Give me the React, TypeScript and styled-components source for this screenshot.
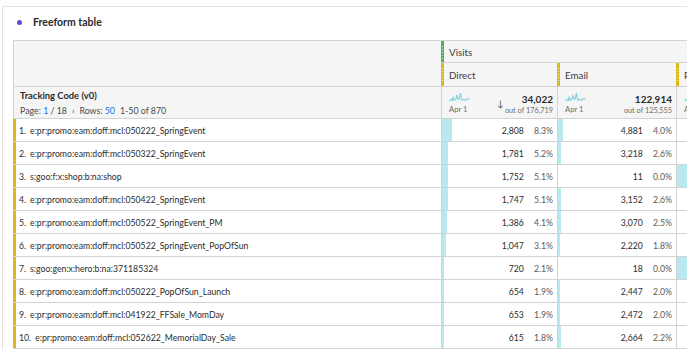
import React from 'react';
import styled, { createGlobalStyle, css } from 'styled-components';

const GlobalStyle = createGlobalStyle`
  *, *::before, *::after {
    box-sizing: border-box;
  }
  html, body {
    margin: 0;
    padding: 0;
    background: #fff;
    overflow: hidden;
  }
  body {
    font-family: 'Lato', 'Open Sans', sans-serif;
    color: #2c2c2c;
  }
`;

const COLS = '428px 116px 119px 140px';
const YELLOW = '#dcb81c';
const GREEN = '#4fae5f';
const BAR = '#b9e9ee';
const LINE = '#d3d3d3';

interface IRow {
  label: string;
  direct: number;
  directPct: number;
  email: number;
  emailPct: number;
  other: number;
}

const rows: IRow[] = [
  { label: 'e:pr:promo:eam:doff:mcl:050222_SpringEvent', direct: 2808, directPct: 8.3, email: 4881, emailPct: 4.0, other: 0 },
  { label: 'e:pr:promo:eam:doff:mcl:050322_SpringEvent', direct: 1781, directPct: 5.2, email: 3218, emailPct: 2.6, other: 0 },
  { label: 's:goo:f:x:shop:b:na:shop', direct: 1752, directPct: 5.1, email: 11, emailPct: 0.0, other: 30 },
  { label: 'e:pr:promo:eam:doff:mcl:050422_SpringEvent', direct: 1747, directPct: 5.1, email: 3152, emailPct: 2.6, other: 0 },
  { label: 'e:pr:promo:eam:doff:mcl:050522_SpringEvent_PM', direct: 1386, directPct: 4.1, email: 3070, emailPct: 2.5, other: 0 },
  { label: 'e:pr:promo:eam:doff:mcl:050522_SpringEvent_PopOfSun', direct: 1047, directPct: 3.1, email: 2220, emailPct: 1.8, other: 0 },
  { label: 's:goo:gen:x:hero:b:na:371185324', direct: 720, directPct: 2.1, email: 18, emailPct: 0.0, other: 30 },
  { label: 'e:pr:promo:eam:doff:mcl:050222_PopOfSun_Launch', direct: 654, directPct: 1.9, email: 2447, emailPct: 2.0, other: 0 },
  { label: 'e:pr:promo:eam:doff:mcl:041922_FFSale_MomDay', direct: 653, directPct: 1.9, email: 2472, emailPct: 2.0, other: 0 },
  { label: 'e:pr:promo:eam:doff:mcl:052622_MemorialDay_Sale', direct: 615, directPct: 1.8, email: 2664, emailPct: 2.2, other: 0 },
];

const fmt = (n: number) => n.toLocaleString('en-US');

/* ***** panel */
const Panel = styled.section`
  margin: 6px 0 0 2px;
  padding: 7px 0 0 10px;
  border-top: 1px solid #e3e3e3;
  border-left: 1px solid #e3e3e3;
  height: 344px;
`;

const PanelTitle = styled.h2`
  display: flex;
  align-items: center;
  gap: 11px;
  height: 16px;
  margin: 0 0 10px 4px;
  font-size: 10.5px;
  font-weight: 700;
  color: #2c2c2c;
`;

const Dot = styled.span`
  width: 5px;
  height: 5px;
  border-radius: 50%;
  background: #5b4fd6;
`;

const Table = styled.div`
  width: max-content;
  border-top: 1px solid ${LINE};
`;

/* ***** header */
const HeaderGrid = styled.div`
  display: grid;
  grid-template-columns: ${COLS};
  grid-template-rows: 22px 24px 31px;
  background: #f5f5f5;
  border-bottom: 1px solid ${LINE};
`;

const Corner = styled.div`
  grid-column: 1;
  grid-row: 1 / 3;
  border-left: 1px solid ${LINE};
  border-bottom: 1px solid ${LINE};
`;

interface IHeadCellProps {
  span?: boolean;
}

const HeadCell = styled.div<IHeadCellProps>`
  ${({ span }) => css`
    display: flex;
    align-items: stretch;
    border-bottom: 1px solid ${LINE};
    font-size: 9.8px;
    color: #3e3e3e;
    white-space: nowrap;
    ${span && 'grid-column: 2 / -1;'}
  `}
`;

interface IGripProps {
  color: string;
}

const Grip = styled.span<IGripProps>`
  ${({ color }) => css`
    flex: none;
    width: 3px;
    background:
      repeating-linear-gradient(to bottom, transparent 0 2px, rgba(255, 255, 255, 0.75) 2px 3px)
        1px 3px / 1px calc(100% - 6px) no-repeat,
      ${color};
  `}
`;

const HeadLabel = styled.span`
  display: flex;
  align-items: center;
  padding-left: 5px;
`;

const DimCell = styled.div`
  display: flex;
  flex-direction: column;
  justify-content: center;
  gap: 4px;
  padding: 1px 0 0 6px;
  border-left: 1px solid ${LINE};
`;

const DimTitle = styled.span`
  font-size: 9.4px;
  font-weight: 700;
  color: #2c2c2c;
`;

const Pager = styled.span`
  display: flex;
  gap: 5px;
  font-size: 8.8px;
  color: #4b4b4b;
`;

const Blue = styled.span`
  color: #1473e6;
`;

const SumCell = styled.div`
  display: flex;
  align-items: flex-start;
  padding: 6px 4px 0 7px;
  border-left: 1px solid ${LINE};
  white-space: nowrap;
`;

const Spark = styled.div`
  display: flex;
  flex-direction: column;
  gap: 1px;
  font-size: 7.6px;
  color: #6e6e6e;
`;

const Arrow = styled.span`
  margin: 5px 0 0 27px;
  font-size: 9px;
  color: #4b4b4b;
`;

const Totals = styled.div`
  display: flex;
  flex-direction: column;
  align-items: flex-end;
  gap: 1px;
  margin-left: auto;
`;

const Total = styled.span`
  font-size: 10px;
  font-weight: 700;
  color: #2c2c2c;
`;

const OutOf = styled.span`
  font-size: 7.3px;
  color: #6e6e6e;
`;

/* ***** rows */
const Row = styled.div`
  display: grid;
  grid-template-columns: ${COLS};
  height: 23px;
  border-bottom: 1px solid ${LINE};
  background: #fff;
`;

const LabelCell = styled.div`
  display: flex;
  align-items: center;
  gap: 4px;
  padding-left: 3px;
  border-left: 3px solid ${YELLOW};
  font-size: 8.7px;
  color: #2c2c2c;
  white-space: nowrap;
`;

const MetricCell = styled.div`
  display: flex;
  align-items: center;
  border-left: 1px solid ${LINE};
  font-size: 8.7px;
  color: #2c2c2c;
`;

const Bar = styled.span`
  align-self: stretch;
  flex: none;
  background: ${BAR};
`;

const Num = styled.span`
  margin-left: auto;
`;

const Pct = styled.span`
  margin-left: 10px;
  padding-right: 4px;
  text-align: right;
  color: #5a5a5a;
`;

const Sparkline = () => (
  <svg width="21" height="10" viewBox="0 0 22 11">
    <polyline
      points="0,9 2,7 3,8 4,4 5,8 7,7 8,2 9,6 10,7 11,5 12,0 13,6 14,8 16,7 18,8 20,6 22,7"
      fill="none"
      stroke="#79d2db"
      strokeWidth="1.2"
    />
  </svg>
);

const GripHead = ({ color, children, span }: { color: string; children: React.ReactNode; span?: boolean }) => (
  <HeadCell span={span}>
    <Grip color={color} />
    <HeadLabel>{children}</HeadLabel>
  </HeadCell>
);

const Metric = ({ value, pct, width }: { value?: number; pct: number; width: number }) => (
  <MetricCell>
    <Bar style={{ width: Math.round((pct / 100) * width) }} />
    {value !== undefined && (
      <>
        <Num>{fmt(value)}</Num>
        <Pct>{pct.toFixed(1)}%</Pct>
      </>
    )}
  </MetricCell>
);

export default function App() {
  return (
    <>
      <GlobalStyle />
      <Panel>
        <PanelTitle>
          <Dot />
          Freeform table
        </PanelTitle>
        <Table>
          <HeaderGrid>
            <Corner />
            <GripHead color={GREEN} span>
              Visits
            </GripHead>
            <GripHead color={YELLOW}>Direct</GripHead>
            <GripHead color={YELLOW}>Email</GripHead>
            <GripHead color={YELLOW}>Paid Search</GripHead>
            <DimCell>
              <DimTitle>Tracking Code (v0)</DimTitle>
              <Pager>
                <span>
                  Page: <Blue>1</Blue> / 18
                </span>
                <span>›</span>
                <span>
                  Rows: <Blue>50</Blue>
                </span>
                <span>1-50 of 870</span>
              </Pager>
            </DimCell>
            <SumCell>
              <Spark>
                <Sparkline />
                Apr 1
              </Spark>
              <Arrow>↓</Arrow>
              <Totals>
                <Total>34,022</Total>
                <OutOf>out of 176,719</OutOf>
              </Totals>
            </SumCell>
            <SumCell>
              <Spark>
                <Sparkline />
                Apr 1
              </Spark>
              <Totals>
                <Total>122,914</Total>
                <OutOf>out of 125,555</OutOf>
              </Totals>
            </SumCell>
            <SumCell>
              <Spark>
                <Sparkline />
                Apr 1
              </Spark>
            </SumCell>
          </HeaderGrid>
          {rows.map((r, i) => (
            <Row key={r.label}>
              <LabelCell>
                <span>{i + 1}.</span>
                <span>{r.label}</span>
              </LabelCell>
              <Metric value={r.direct} pct={r.directPct} width={116} />
              <Metric value={r.email} pct={r.emailPct} width={119} />
              <Metric pct={r.other} width={140} />
            </Row>
          ))}
        </Table>
      </Panel>
    </>
  );
}
